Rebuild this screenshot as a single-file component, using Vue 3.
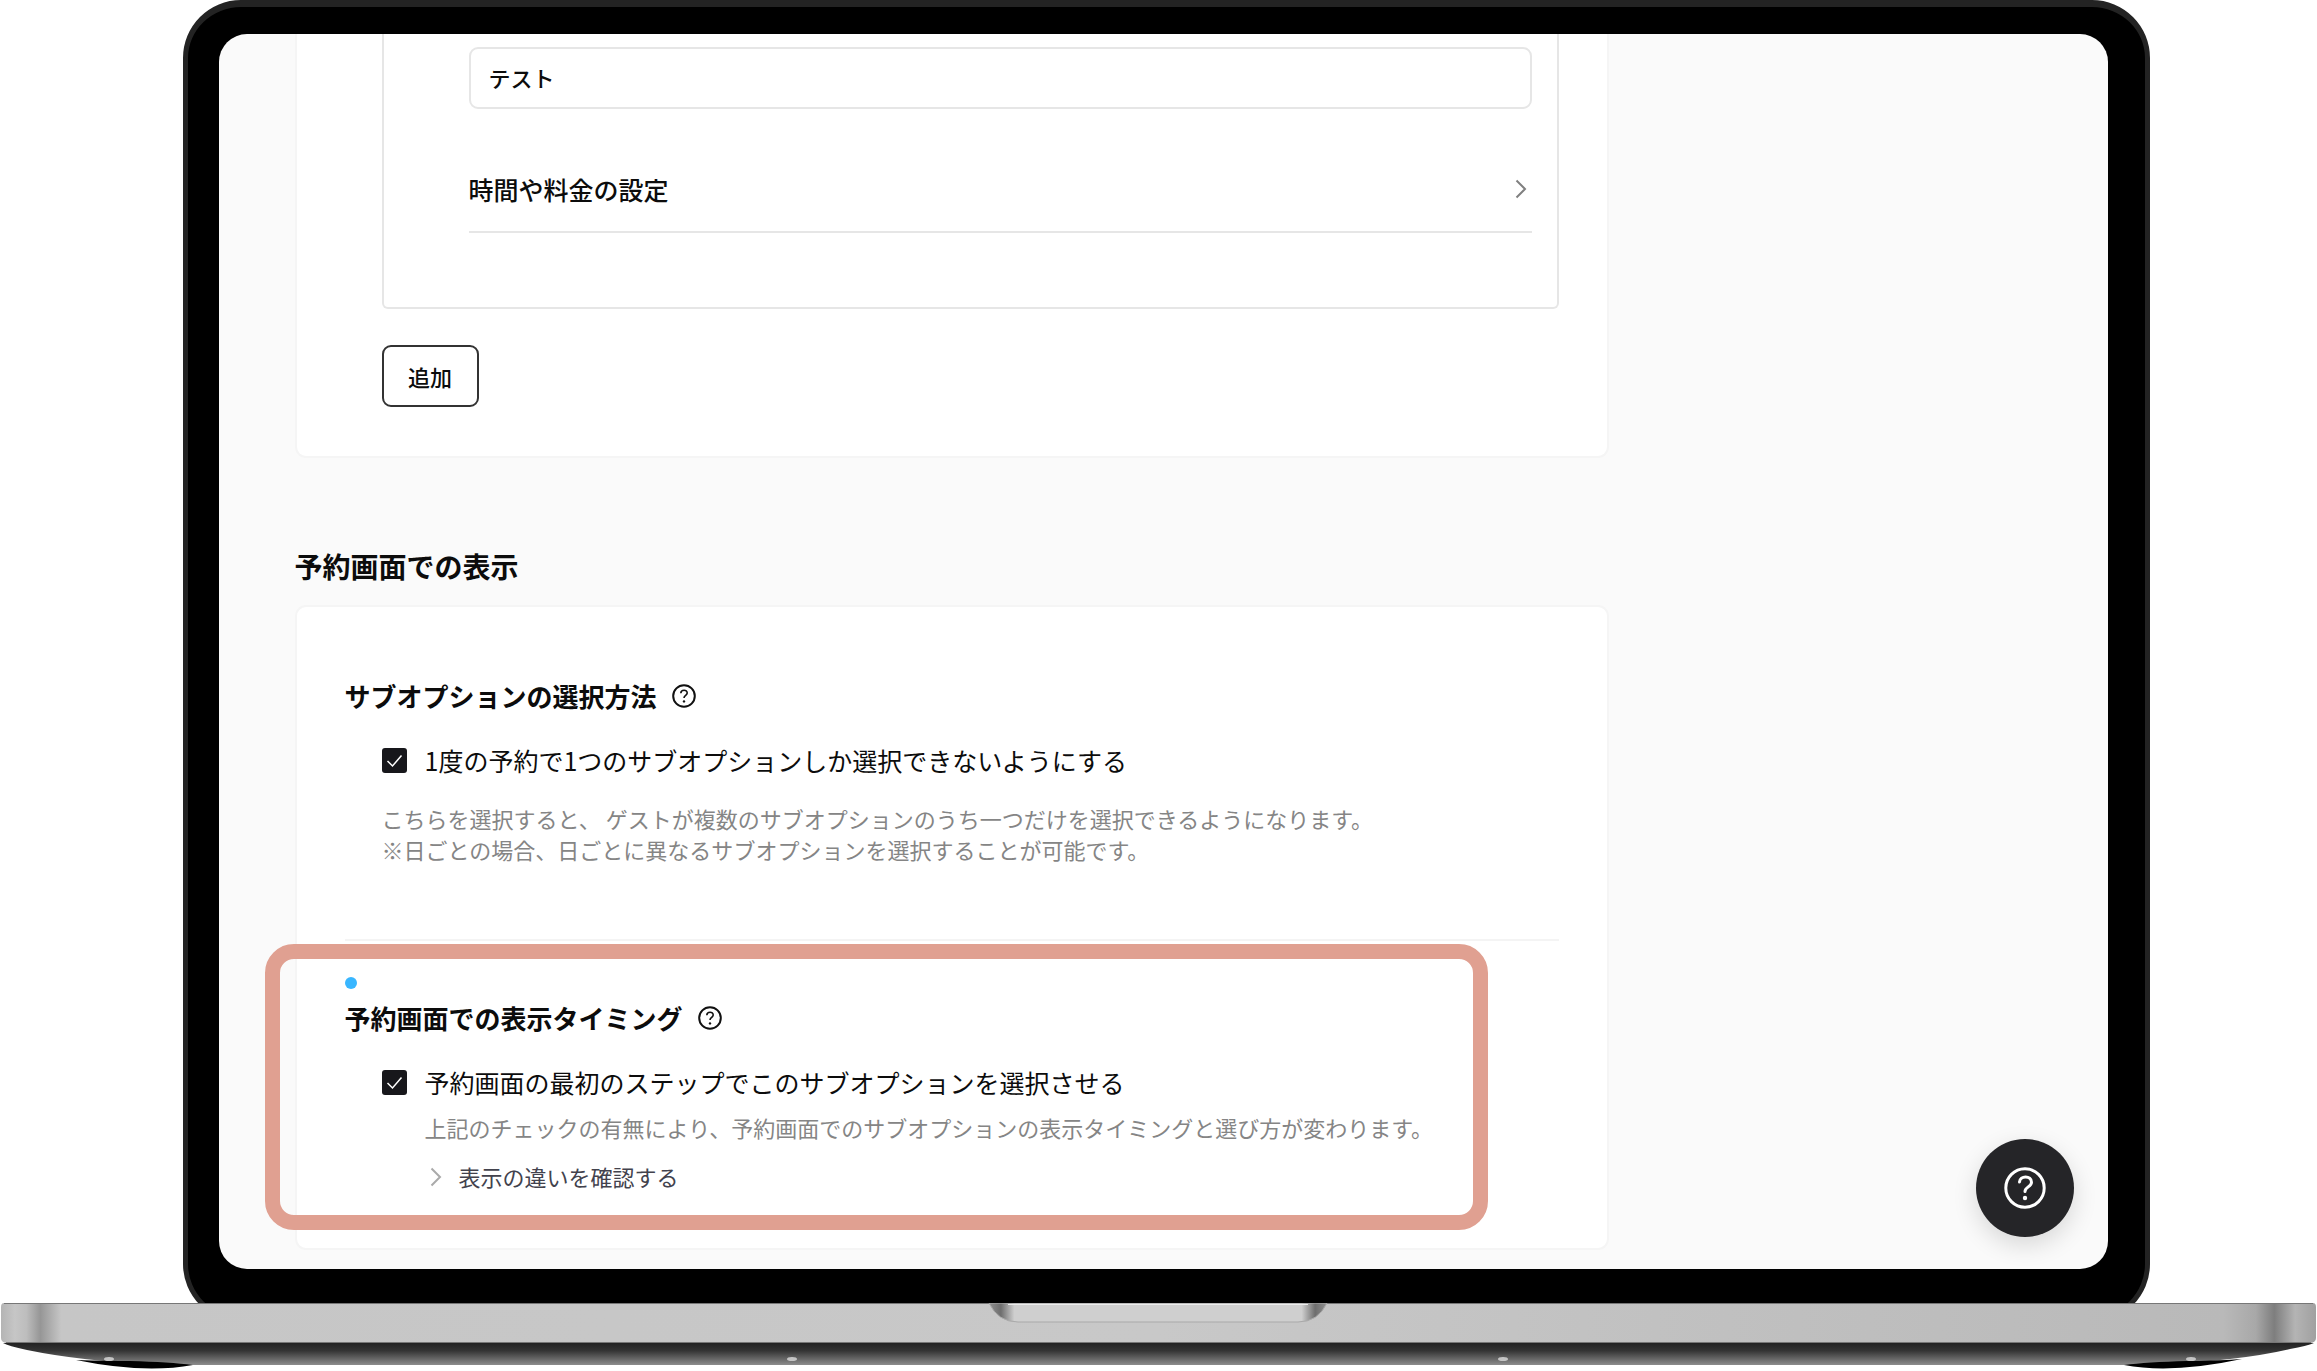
<script setup>
import { ref } from 'vue'

const optionName = ref('テスト')
const singleChoice = ref(true)
const firstStep = ref(true)
</script>

<template>
  <div class="laptop">
    <div class="lid">
      <div class="screen">
        <main class="page">
          <section class="card card-top">
            <div class="option-box">
              <input v-model="optionName" class="text-input" type="text" aria-label="サブオプション名" />
              <button class="row-button" type="button">
                <span>時間や料金の設定</span>
                <svg class="chevron" viewBox="0 0 12 20" aria-hidden="true"><path d="M1.5 1.5 10 10 1.5 18.5" /></svg>
              </button>
            </div>
            <button class="add-button" type="button">追加</button>
          </section>

          <h2>予約画面での表示</h2>

          <section class="card card-display">
            <div class="setting">
              <h3>
                <span>サブオプションの選択方法</span>
                <svg class="help" viewBox="0 0 24 24" aria-hidden="true">
                  <circle cx="12" cy="12" r="10.8" />
                  <path d="M8.8 9.2c.2-3.8 6.4-3.8 6.4-.2 0 2.300-3.200 2.400-3.200 5" />
                  <circle class="dot" cx="12" cy="17.4" r="1.2" />
                </svg>
              </h3>
              <label class="check">
                <input v-model="singleChoice" type="checkbox" />
                <span>1度の予約で1つのサブオプションしか選択できないようにする</span>
              </label>
              <p class="note">こちらを選択すると、 ゲストが複数のサブオプションのうち一つだけを選択できるようになります。<br />※日ごとの場合、日ごとに異なるサブオプションを選択することが可能です。</p>
            </div>

            <div class="setting timing">
              <span class="highlight" aria-hidden="true"></span>
              <span class="new-dot" aria-hidden="true"></span>
              <h3>
                <span>予約画面での表示タイミング</span>
                <svg class="help" viewBox="0 0 24 24" aria-hidden="true">
                  <circle cx="12" cy="12" r="10.8" />
                  <path d="M8.8 9.2c.2-3.8 6.4-3.8 6.4-.2 0 2.300-3.200 2.400-3.200 5" />
                  <circle class="dot" cx="12" cy="17.4" r="1.2" />
                </svg>
              </h3>
              <label class="check">
                <input v-model="firstStep" type="checkbox" />
                <span>予約画面の最初のステップでこのサブオプションを選択させる</span>
              </label>
              <p class="note inset">上記のチェックの有無により、予約画面でのサブオプションの表示タイミングと選び方が変わります。</p>
              <button class="disclosure" type="button">
                <svg class="chevron light" viewBox="0 0 12 20" aria-hidden="true"><path d="M1.5 1.5 10 10 1.5 18.5" /></svg>
                <span>表示の違いを確認する</span>
              </button>
            </div>
          </section>
        </main>

        <button class="fab" type="button" aria-label="ヘルプ">
          <svg viewBox="0 0 42 42" aria-hidden="true">
            <circle cx="21" cy="21" r="19.2" />
            <path d="M15.5 15c.3-6.800 12-6.800 12 .2 0 4.600-6.500 4.800-6.500 9.300" />
            <circle class="dot" cx="21" cy="31" r="2.2" />
          </svg>
        </button>
      </div>
    </div>

    <svg class="base" viewBox="0 0 2317 68" preserveAspectRatio="none" aria-hidden="true">
      <defs>
        <linearGradient id="metal" x1="0" x2="1" y1="0" y2="0">
          <stop offset="0" stop-color="#b4b4b4" />
          <stop offset=".006" stop-color="#c6c6c6" />
          <stop offset=".011" stop-color="#bdbdbd" />
          <stop offset=".017" stop-color="#969696" />
          <stop offset=".026" stop-color="#c6c6c6" />
          <stop offset=".5" stop-color="#c8c8c8" />
          <stop offset=".96" stop-color="#b9b9b9" />
          <stop offset=".974" stop-color="#a8a8a8" />
          <stop offset=".982" stop-color="#7e7e7e" />
          <stop offset=".991" stop-color="#b4b4b4" />
          <stop offset="1" stop-color="#a0a0a0" />
        </linearGradient>
        <linearGradient id="under" x1="0" x2="0" y1="0" y2="1">
          <stop offset="0" stop-color="#222222" />
          <stop offset=".35" stop-color="#343434" />
          <stop offset="1" stop-color="#8c8c8c" />
        </linearGradient>
        <linearGradient id="notch" x1="0" x2="1" y1="0" y2="0">
          <stop offset="0" stop-color="#909090" />
          <stop offset=".035" stop-color="#6e6e6e" />
          <stop offset=".075" stop-color="#cfcfcf" />
          <stop offset=".925" stop-color="#cfcfcf" />
          <stop offset=".965" stop-color="#6e6e6e" />
          <stop offset="1" stop-color="#909090" />
        </linearGradient>
      </defs>
      <path fill="url(#under)" d="M3 40H2314Q2307 43 2290 46Q2240 58 2150 62H160Q80 58 27 47Q8 43 3 40Z" />
      <path d="M76 57Q108 58 130 58Q170 59 193 62Q144 71 76 57ZM2242 56Q2210 58 2187 58Q2147 59 2124 62Q2172 71 2242 56Z" />
      <path fill="url(#metal)" d="M4 0H2313Q2316 0 2316 4V35Q2316 40 2309 40H8Q1 40 1 35V4Q1 0 4 0Z" />
      <path fill="#777" d="M4 0H2313V1H4ZM6 39H2311V40H6Z" />
      <path fill="url(#notch)" stroke="#a9a9a9" stroke-width="1" d="M989 0Q998 19 1018 19H1298Q1318 19 1327 0Z" />
      <path fill="#ececec" d="M1008 1H1308V2H1008Z" />
      <g fill="#c4c4c4"><ellipse cx="109" cy="56" rx="5" ry="2" /><ellipse cx="792" cy="56" rx="5" ry="2" /><ellipse cx="1503" cy="56" rx="5" ry="2" /><ellipse cx="2191" cy="56" rx="5" ry="2" /></g>
    </svg>
  </div>
</template>

<style>
body {
  margin: 0;
  background: #fff;
}
</style>

<style scoped>
.laptop {
  font-family: "Noto Sans CJK JP", sans-serif;
  color: #0c0c0c;
}

.lid {
  margin: 0 7.2% -19px 7.9%;
  padding: 27px 37px 48px 31px;
  border: solid #232323;
  border-width: 7px 5px 5px;
  border-radius: 58px;
  background: #000;
}

.screen {
  position: relative;
  overflow: hidden;
  border-radius: 28px;
  background: #fafafa;
}

.page {
  padding: 0 26.4% 19px 4%;
}

.card {
  box-sizing: border-box;
  border: 2px solid #f5f5f5;
  border-radius: 11px;
  background: #fff;
}

.card-top {
  border-top: 0;
  border-radius: 0 0 11px 11px;
  padding: 0 48px 49px 85px;
}

.option-box {
  padding: 13px 25px 74px 85px;
  border: 2px solid #e6e6e6;
  border-top: 0;
  border-radius: 0 0 6px 6px;
}

button,
input {
  font-family: inherit;
  color: inherit;
}

button {
  padding: 0;
  border: 0;
  background: none;
}

.text-input {
  box-sizing: border-box;
  display: block;
  width: 100%;
  height: 62px;
  padding: 0 18px 2px;
  border: 2px solid #e6e6e6;
  border-radius: 9px;
  background: #fff;
  font-size: 22px;
  font-weight: 500;
}

.row-button {
  box-sizing: border-box;
  display: flex;
  align-items: center;
  justify-content: space-between;
  width: 100%;
  height: 86px;
  margin-top: 38px;
  padding-right: 5px;
  border-bottom: 2px solid #e6e6e6;
  font-size: 25px;
  font-weight: 500;
}

.chevron {
  width: 12px;
  height: 20px;
  fill: none;
  stroke: #808080;
  stroke-width: 2;
}

.chevron.light {
  stroke: #aaa;
}

.add-button {
  display: block;
  width: 97px;
  height: 62px;
  margin-top: 36px;
  border: 2px solid #333;
  border-radius: 9px;
  background: #fff;
  font-size: 22px;
  font-weight: 500;
}

h2,
h3,
p {
  margin: 0;
}

h2 {
  margin-top: 88px;
  font-size: 28px;
  line-height: 40px;
  font-weight: 700;
}

.card-display {
  margin-top: 19px;
  padding: 70px 48px 56px;
}

.setting {
  border-bottom: 2px solid #f4f4f4;
  padding-bottom: 74px;
}

h3 {
  display: flex;
  align-items: center;
  gap: 15px;
  font-size: 26px;
  line-height: 38px;
  font-weight: 700;
}

.help {
  width: 24px;
  height: 24px;
  fill: none;
  stroke: #111;
  stroke-width: 2;
}

.help path {
  stroke-width: 1.6;
}

.dot {
  fill: #111;
  stroke: none;
}

.check {
  display: flex;
  align-items: center;
  gap: 18px;
  margin: 26px 0 0 37px;
  font-size: 25px;
  line-height: 38px;
}

.check input {
  appearance: none;
  flex: none;
  width: 25px;
  height: 25px;
  margin: 0;
  border-radius: 3px;
  background: #17171b url("data:image/svg+xml,%3Csvg xmlns='http://www.w3.org/2000/svg' viewBox='0 0 25 25'%3E%3Cpath d='M5.500 13l5 5 9-10.500' fill='none' stroke='white' stroke-width='1.500'/%3E%3C/svg%3E") center / contain no-repeat;
}

.note {
  margin: 24px 0 0 37px;
  color: #858585;
  font-size: 22px;
  line-height: 31px;
}

.timing {
  position: relative;
  padding: 36px 0 0;
  border: 0;
}

.highlight {
  position: absolute;
  inset: 3px 71px -38px -80px;
  border: 15px solid #e0a091;
  border-radius: 29px;
}

.new-dot {
  display: block;
  width: 12px;
  height: 12px;
  margin-bottom: 10px;
  border-radius: 50%;
  background: #38b6ff;
}

.note.inset {
  margin: 11px 0 0 80px;
}

.disclosure {
  display: flex;
  align-items: center;
  gap: 17px;
  margin: 18px 0 0 85px;
  color: #42424d;
  font-size: 22px;
  line-height: 31px;
}

.fab {
  position: absolute;
  right: 34px;
  bottom: 32px;
  display: grid;
  place-items: center;
  width: 98px;
  height: 98px;
  border-radius: 50%;
  background: #252528;
  box-shadow: 0 8px 24px rgb(0 0 0 / 14%);
}

.fab svg {
  width: 42px;
  height: 42px;
  fill: none;
  stroke: #fff;
  stroke-width: 3;
  stroke-linecap: round;
}

.fab .dot {
  fill: #fff;
  stroke: none;
}

.base {
  position: relative;
  display: block;
  width: 100%;
  height: 68px;
}
</style>
